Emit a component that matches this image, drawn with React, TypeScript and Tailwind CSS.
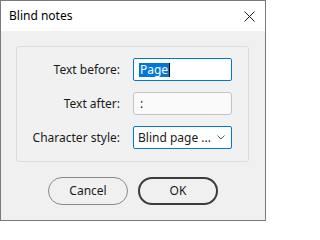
import React from "react";

const font = { fontFamily: '"Noto Sans", "Open Sans", sans-serif' };

function Row({ label, children }: { label: string; children: React.ReactNode }) {
  return (
    <div className="flex items-center gap-[13px]">
      <div className="w-[103px] text-right text-[12px] text-[#1a1a1a]">{label}</div>
      {children}
    </div>
  );
}

export default function App() {
  return (
    <div
      className="flex h-[221px] w-[266px] flex-col border border-[#7a7a7a] bg-[#f0f0f0] text-[12px] leading-none"
      style={font}
    >
      <div className="flex h-[30px] items-center justify-between bg-white pl-[8px] pr-[10px]">
        <span className="text-[12px] text-black">Blind notes</span>
        <svg width="11" height="11" viewBox="0 0 11 11">
          <path d="M0.5 0.5 L10.5 10.5 M10.5 0.5 L0.5 10.5" stroke="#1a1a1a" strokeWidth="1" />
        </svg>
      </div>

      <div className="ml-[15px] mt-[15px] flex w-[233px] flex-col gap-[11px] rounded-[3px] border border-[#dcdcdc] bg-[#f1f1f1] pb-[12px] pt-[11px]">
        <Row label="Text before:">
          <div className="flex h-[23px] w-[99px] items-center rounded-[2px] border border-[#0078d7] bg-white pl-[5px]">
            <span className="flex h-[14px] items-center bg-[#0078d7] px-[1px] text-white">Page</span>
            <span className="h-[14px] w-[1px] bg-black" />
          </div>
        </Row>
        <Row label="Text after:">
          <div className="flex h-[23px] w-[99px] items-center rounded-[3px] border border-[#c4c4c4] bg-[#fafafa] pl-[6px] text-[#1a1a1a]">
            :
          </div>
        </Row>
        <Row label="Character style:">
          <div className="flex h-[23px] w-[99px] items-center justify-between rounded-[2px] border border-[#0078d7] bg-white pl-[4px] pr-[6px] text-[#1a1a1a]">
            <span>Blind page ...</span>
            <svg width="8" height="5" viewBox="0 0 8 5">
              <path d="M0.5 0.5 L4 4 L7.5 0.5" stroke="#606060" strokeWidth="1" fill="none" />
            </svg>
          </div>
        </Row>
      </div>

      <div className="mt-[15px] flex justify-center gap-[10px]">
        <button className="flex h-[28px] w-[80px] items-center justify-center rounded-full border border-[#8a8a8a] bg-[#f0f0f0] text-[12px] text-[#1a1a1a]">
          Cancel
        </button>
        <button className="flex h-[28px] w-[80px] items-center justify-center rounded-full border-2 border-[#3c3c3c] bg-[#f0f0f0] text-[12px] text-[#1a1a1a]">
          OK
        </button>
      </div>
    </div>
  );
}
